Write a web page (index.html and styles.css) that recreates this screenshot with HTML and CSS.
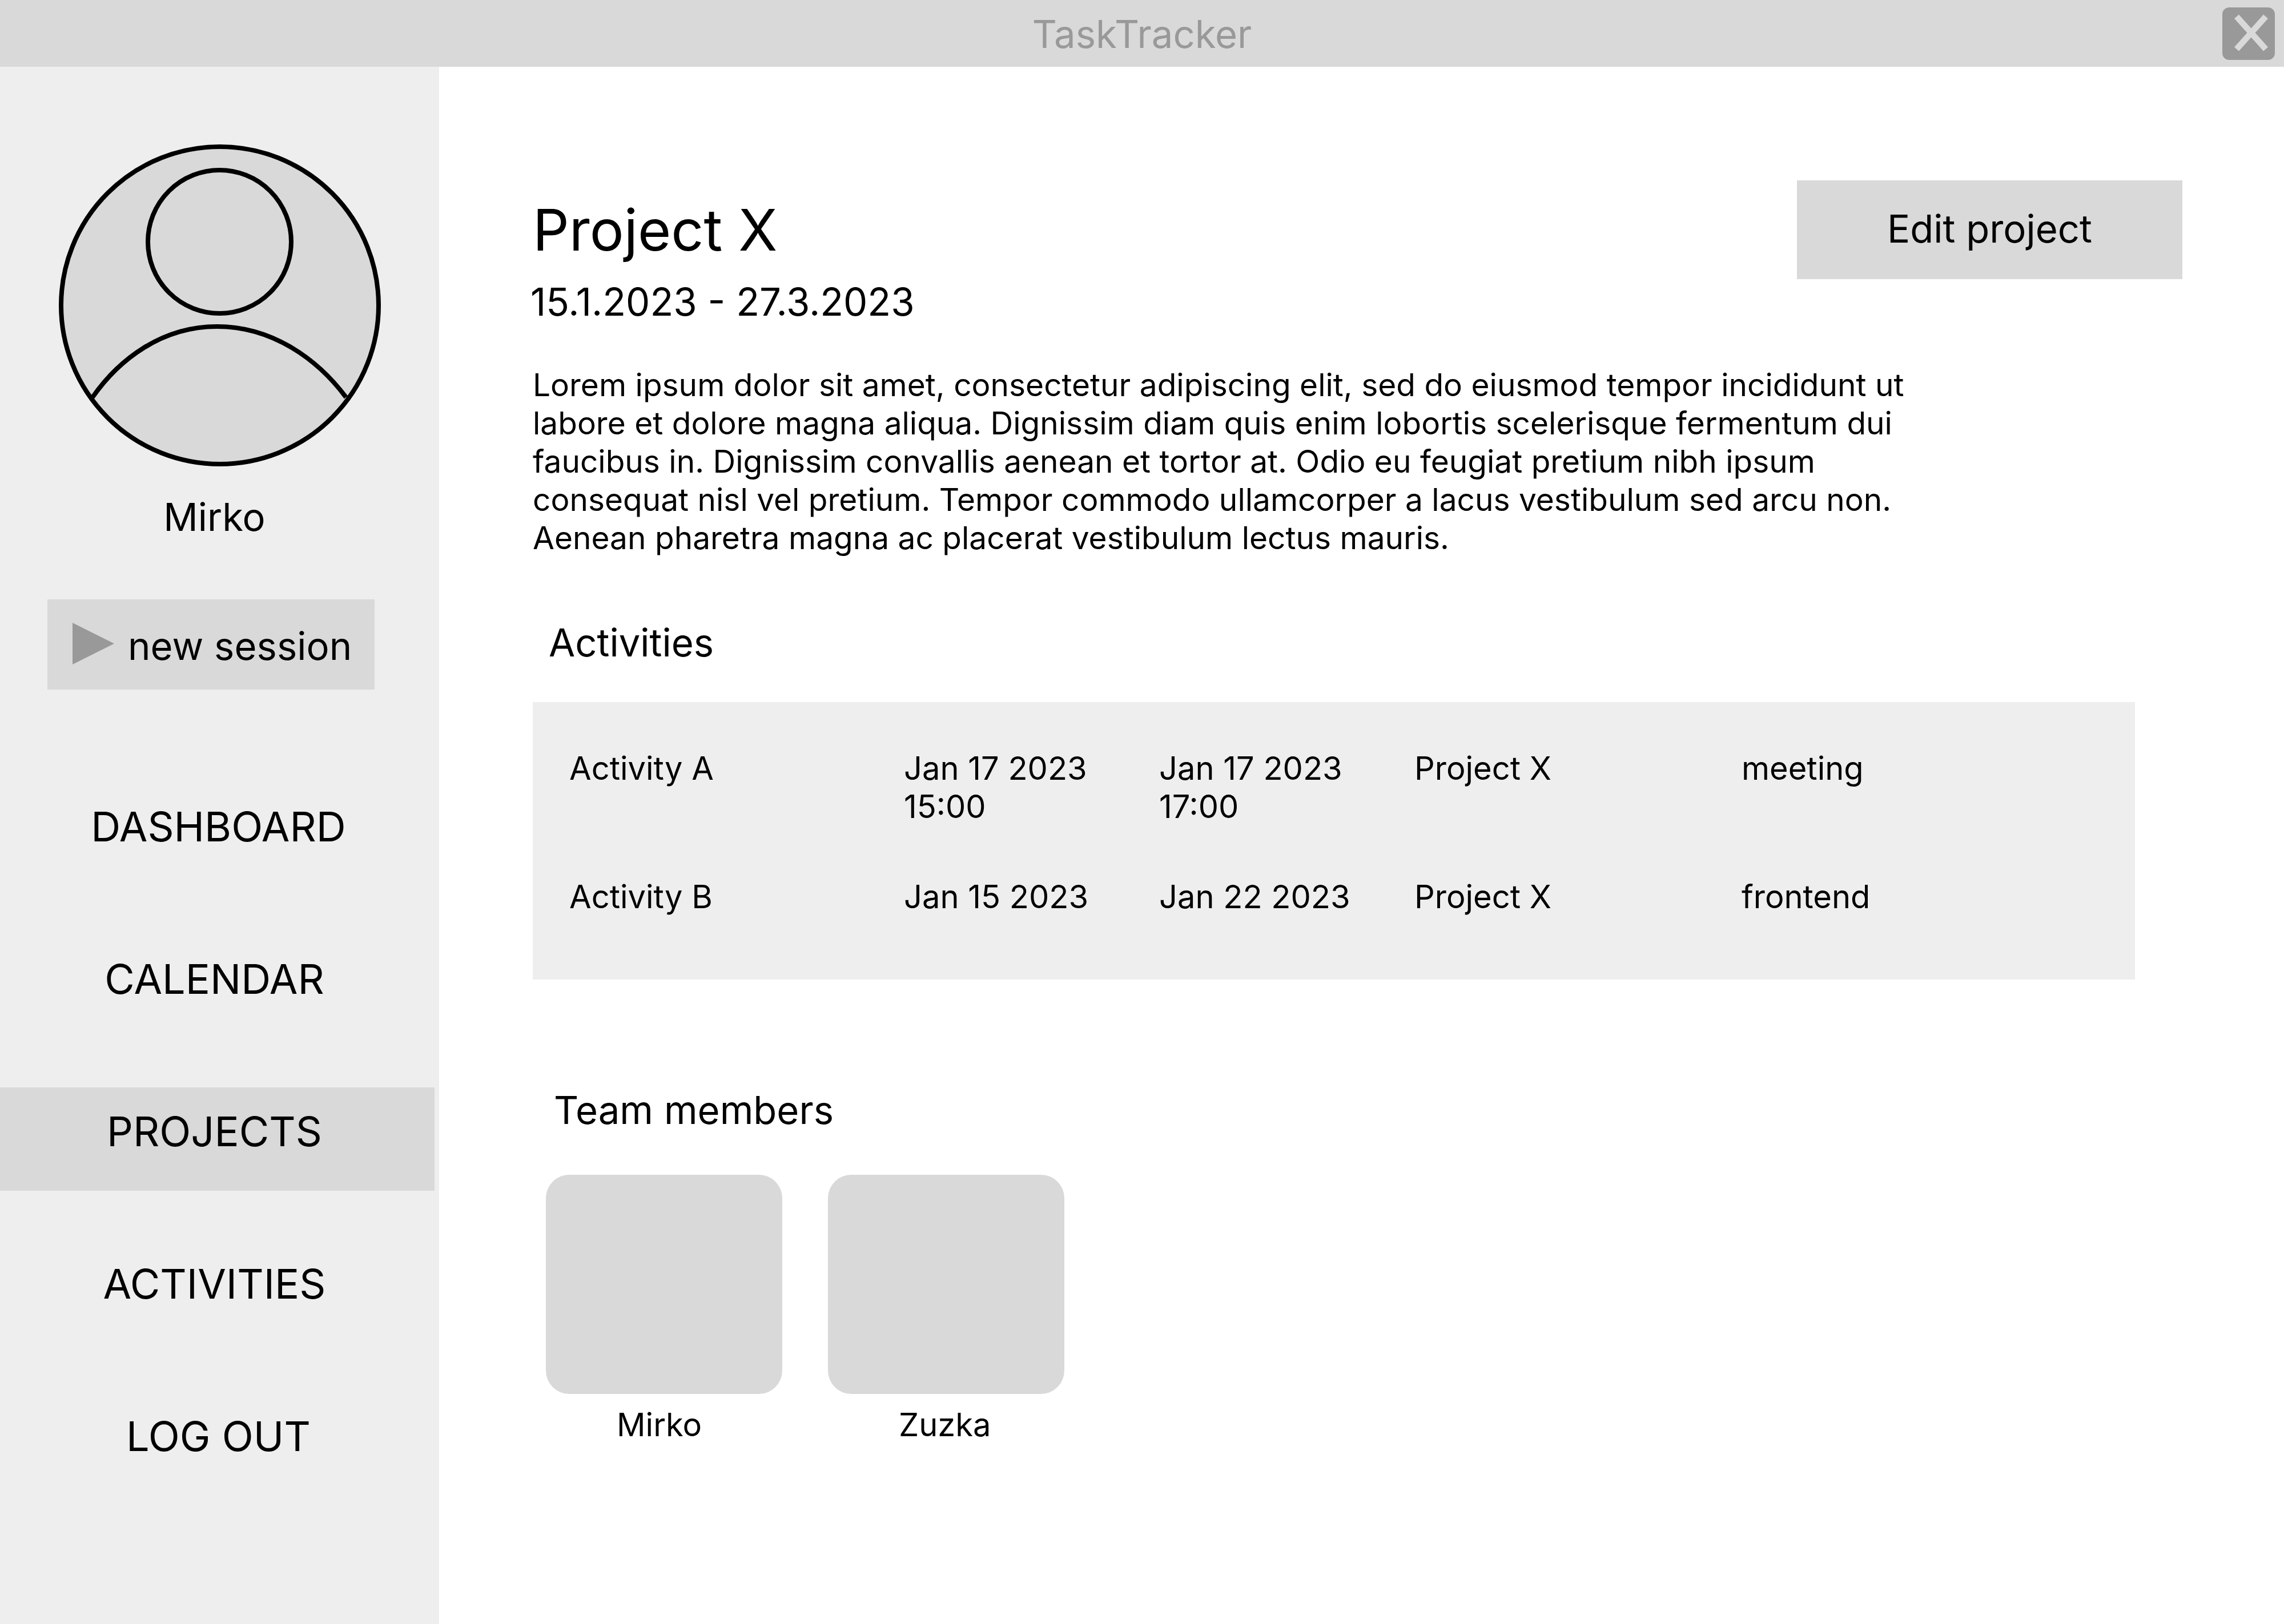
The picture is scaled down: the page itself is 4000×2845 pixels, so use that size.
FILE: index.html
```html
<!DOCTYPE html>
<html lang="en">
<head>
<meta charset="utf-8">
<meta name="viewport" content="width=device-width, initial-scale=1">
<title>TaskTracker</title>
<link rel="stylesheet" href="styles.css">
</head>
<body class="app">
<header class="titlebar">
  <span class="titlebar-name">TaskTracker</span>
  <button class="close" type="button" aria-label="Close">
    <svg class="close-icon" viewBox="0 0 92 92" aria-hidden="true">
      <path d="M25 16L76 73M76 16L25 73" fill="none" stroke="#d9d9d9" stroke-width="10.6"/>
    </svg>
  </button>
</header>
<div class="body">
  <aside class="sidebar">
    <svg class="avatar" viewBox="0 0 564 564" role="img" aria-label="Profile picture">
      <circle cx="282" cy="282" r="278" fill="#d9d9d9" stroke="#000" stroke-width="8"/>
      <circle cx="281.5" cy="170.5" r="125.5" fill="#d9d9d9" stroke="#000" stroke-width="8"/>
      <path d="M59 443C105 377 180 319 277 319S453 376 503 443" fill="none" stroke="#000" stroke-width="8"/>
    </svg>
    <p class="user">Mirko</p>
    <button class="session" type="button">
      <svg class="play" viewBox="0 0 73 73" aria-hidden="true"><path d="M0 0L73 36.500L0 73Z" fill="#999"/></svg>
      <span>new session</span>
    </button>
    <nav class="nav">
      <a class="nav-link nav-link-wide" href="#dashboard">DASHBOARD</a>
      <a class="nav-link" href="#calendar">CALENDAR</a>
      <a class="nav-link nav-link-active" href="#projects" aria-current="page">PROJECTS</a>
      <a class="nav-link" href="#activities">ACTIVITIES</a>
      <a class="nav-link nav-link-wide" href="#logout">LOG OUT</a>
    </nav>
  </aside>
  <main class="main">
    <div class="project-head">
      <div class="project-info">
        <h1 class="project-title">Project X</h1>
        <p class="project-dates">15.1.2023 - 27.3.2023</p>
      </div>
      <button class="edit" type="button">Edit project</button>
    </div>
    <p class="description">Lorem ipsum dolor sit amet, consectetur adipiscing elit, sed do eiusmod tempor incididunt ut labore et dolore magna aliqua. Dignissim diam quis enim lobortis scelerisque fermentum dui faucibus in. Dignissim convallis aenean et tortor at. Odio eu feugiat pretium nibh ipsum consequat nisl vel pretium. Tempor commodo ullamcorper a lacus vestibulum sed arcu non. Aenean pharetra magna ac placerat vestibulum lectus mauris.</p>
    <section class="activities">
      <h2 class="section-title" id="activities">Activities</h2>
      <div class="panel">
        <table class="table" aria-labelledby="activities">
          <colgroup>
            <col class="col-name"><col class="col-date"><col class="col-date"><col class="col-project"><col>
          </colgroup>
          <tbody>
            <tr><td>Activity A</td><td>Jan 17 2023<br>15:00</td><td>Jan 17 2023<br>17:00</td><td>Project X</td><td>meeting</td></tr>
            <tr><td>Activity B</td><td>Jan 15 2023</td><td>Jan 22 2023</td><td>Project X</td><td>frontend</td></tr>
          </tbody>
        </table>
      </div>
    </section>
    <section class="team">
      <h2 class="section-title">Team members</h2>
      <ul class="members">
        <li class="member"><div class="member-photo"></div><span class="member-name">Mirko</span></li>
        <li class="member"><div class="member-photo"></div><span class="member-name">Zuzka</span></li>
      </ul>
    </section>
  </main>
</div>
</body>
</html>
```
FILE: styles.css
```css
* {
  box-sizing: border-box;
  margin: 0;
  padding: 0;
}

.app {
  display: flex;
  flex-direction: column;
  min-height: 100vh;
  background: #fff;
  color: #000;
  font-family: Inter, "Liberation Sans", sans-serif;
  font-size: 67px;
  line-height: 81px;
}

button {
  border: 0;
  color: inherit;
  font: inherit;
  cursor: pointer;
}

/* Window title bar */
.titlebar {
  display: grid;
  grid-template-columns: 1fr auto 1fr;
  align-items: center;
  padding: 13px 16px 12px;
  background: #d9d9d9;
  color: #999;
}

.titlebar-name {
  grid-column: 2;
}

.close {
  grid-column: 3;
  justify-self: end;
  width: 92px;
  height: 92px;
  border-radius: 12px;
  background: #999;
}

.close-icon {
  display: block;
  width: 92px;
  height: 92px;
}

.body {
  display: flex;
  flex: 1;
}

/* Sidebar */
.sidebar {
  display: flex;
  flex: 0 0 769px;
  flex-direction: column;
  min-width: 0;
  padding-top: 136px;
  background: #eee;
}

.avatar {
  display: block;
  align-self: center;
  width: 564px;
  height: 564px;
}

.user {
  margin-top: 48px;
  padding-right: 18px;
  text-align: center;
}

.session {
  display: flex;
  align-items: flex-start;
  gap: 24px;
  margin: 104px 113px 0 83px;
  padding: 41px 0 36px 44px;
  background: #d9d9d9;
  white-space: nowrap;
}

.play {
  flex: none;
  width: 73px;
  height: 73px;
}

.nav {
  display: flex;
  flex-direction: column;
  gap: 86px;
  margin-top: 163px;
}

.nav-link {
  margin-right: 8px;
  padding: 33px 10px 60px 0;
  color: inherit;
  font-size: 72px;
  line-height: 88px;
  text-align: center;
  text-decoration: none;
}

.nav-link-wide {
  padding-right: 0;
  padding-left: 4px;
}

.nav-link-active {
  background: #d9d9d9;
}

/* Project page */
.main {
  flex: 1;
  min-width: 0;
  padding: 199px 178px 199px 164px;
}

.project-head {
  display: flex;
  align-items: flex-start;
  justify-content: space-between;
}

.project-info {
  padding-top: 26px;
}

.project-title {
  font-size: 100px;
  font-weight: 400;
  line-height: 121px;
}

.project-dates {
  margin: 25px 0 0 -4px;
}

.edit {
  width: 675px;
  padding: 44px 0 48px;
  background: #d9d9d9;
}

.description {
  max-width: 2500px;
  margin-top: 72px;
  font-size: 55px;
  line-height: 67px;
}

.section-title {
  font-size: 67px;
  font-weight: 400;
  line-height: 81px;
}

.activities {
  margin: 109px 83px 0 0;
}

.activities .section-title {
  padding-left: 28px;
}

.panel {
  margin-top: 64px;
  padding: 83px 64px 20px;
  background: #eee;
}

.table {
  width: 100%;
  border-collapse: collapse;
  table-layout: fixed;
  font-size: 56px;
  line-height: 67px;
}

.table td {
  padding-bottom: 91px;
  vertical-align: top;
}

.col-name {
  width: 586px;
}

.col-date {
  width: 447px;
}

.col-project {
  width: 573px;
}

.team {
  margin-top: 188px;
  padding-left: 23px;
}

.team .section-title {
  padding-left: 14px;
}

.members {
  display: flex;
  gap: 80px;
  margin-top: 73px;
  list-style: none;
}

.member {
  width: 414px;
}

.member-photo {
  height: 384px;
  border-radius: 41px;
  background: #d9d9d9;
}

.member-name {
  display: block;
  margin-top: 21px;
  padding-left: 124px;
  font-size: 56px;
  line-height: 67px;
}
```
